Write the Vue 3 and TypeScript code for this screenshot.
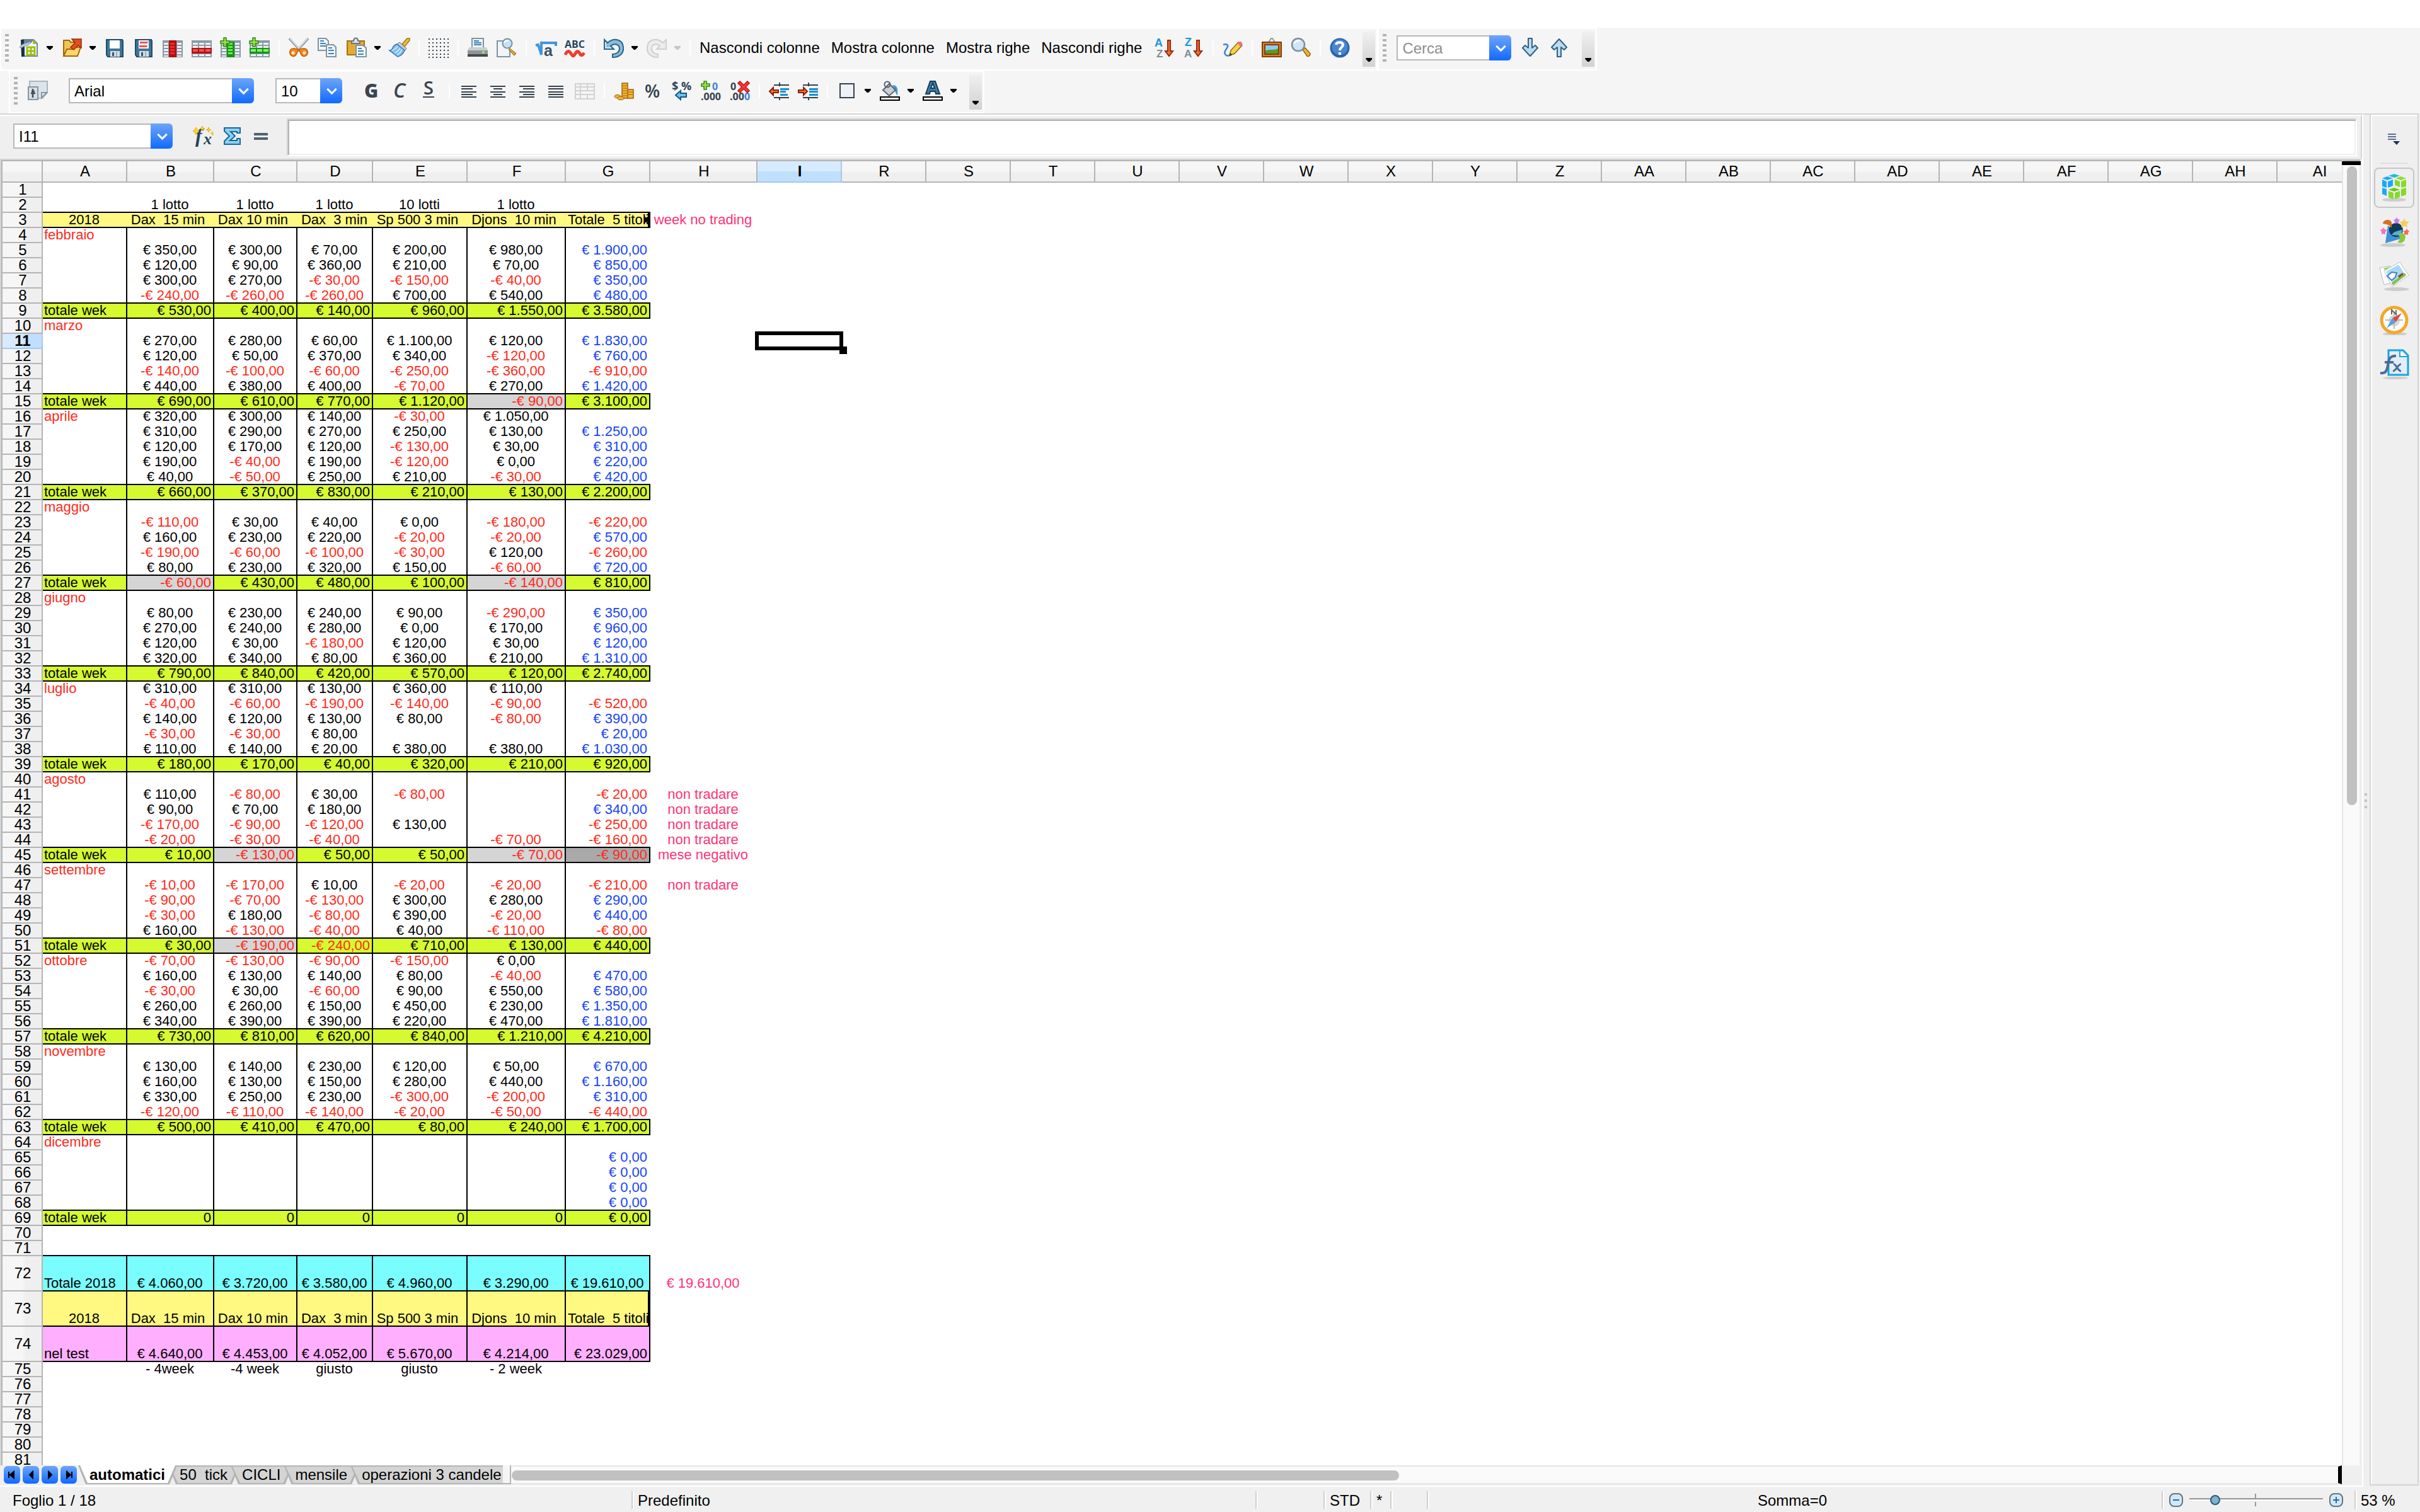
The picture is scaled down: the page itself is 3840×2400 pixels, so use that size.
<script setup lang="ts">
import { computed } from 'vue'

type Cell = { text: string; cls: string }

const icons: Record<string, string> = {
  newSheet: '<path d="M6 3h17l6 6v20H6z" fill="#fbfcfd" stroke="#6f8796" stroke-width="2"/><path d="M3 3h6v27H4z" fill="#16324a"/><path d="M8 2h16l-5 7H8z" fill="#6b8494"/><path d="M1 15C6 8 13 9 18 6c2 4-4 6-8 7s-5 4-9 2z" fill="#b9c9d2" stroke="#7e96a4"/><path d="M22 3l7 7h-7z" fill="#a7c41c"/><path d="M13 15h12v12H13zM19 15v12M13 21h12" fill="#fff" stroke="#9dc010" stroke-width="3"/>',
  open: '<path d="M3 28V4h9l2 3h9v20z" fill="#f3c556" stroke="#a96509" stroke-width="2"/><path d="M3 29l5-11h9l2-3h11l-5 14z" fill="#fbd66a" stroke="#a96509" stroke-width="2"/><path d="M14 15l7-7-5-6h15v14l-5-4-7 7z" fill="#e2501d" stroke="#9c2c08" stroke-width="1.5"/>',
  save: '<path d="M3 3h25l1 2v25H5l-2-3z" fill="#3f7596" stroke="#1f4d6b" stroke-width="2"/><path d="M8 4h16v13H8z" fill="#fff"/><path d="M9 21h15v9H9z" fill="#d6dde2"/><path d="M12 23h3v6h-3z" fill="#33566d"/><path d="M18 22h2v8h-2z" fill="#9fb0bb"/>',
  saveAs: '<path d="M3 3h25l1 2v25H5l-2-3z" fill="#3f7596" stroke="#1f4d6b" stroke-width="2"/><path d="M8 4h16v13H8z" fill="#fff"/><path d="M10 6h13l-1 3H10zM9 12h13l-1 3H9z" fill="#ef5350"/><path d="M9 21h15v9H9z" fill="#d6dde2"/><path d="M12 23h3v6h-3z" fill="#33566d"/><path d="M18 22h2v8h-2z" fill="#9fb0bb"/>',
  delCol: '<path d="M0 4h32v27H0z" fill="#8d9aa6"/><path d="M2 8h7v3H2zM2 13h7v3H2zM2 18h7v3H2zM2 23h7v3H2zM2 28h7v2H2zM23 8h7v3h-7zM23 13h7v3h-7zM23 18h7v3h-7zM23 23h7v3h-7zM23 28h7v2h-7z" fill="#eef2f6"/><path d="M10 4h12v27H10z" fill="#b01212"/><path d="M12 8h7v3h-7zM12 13h7v3h-7zM12 18h7v3h-7zM12 23h7v3h-7z" fill="#ef2b2b"/>',
  delRow: '<path d="M0 4h32v27H0z" fill="#8d9aa6"/><path d="M2 8h8v3H2zM12 8h8v3h-8zM22 8h8v3h-8zM2 13h8v3H2zM12 13h8v3h-8zM22 13h8v3h-8zM2 26h8v3H2zM12 26h8v3h-8zM22 26h8v3h-8z" fill="#eef2f6"/><path d="M0 16h32v9H0z" fill="#b01212"/><path d="M2 18h8v4H2zM12 18h8v4h-8zM22 18h8v4h-8z" fill="#f25050"/>',
  insCol: '<path d="M0 4h32v27H0z" fill="#8d9aa6"/><path d="M2 8h7v3H2zM2 13h7v3H2zM2 18h7v3H2zM2 23h7v3H2zM2 28h7v2H2zM23 8h7v3h-7zM23 13h7v3h-7zM23 18h7v3h-7zM23 23h7v3h-7zM23 28h7v2h-7z" fill="#eef2f6"/><path d="M10 6h12v25H10z" fill="#17921b"/><path d="M12 8h7v3h-7zM12 13h7v3h-7zM12 18h7v3h-7zM12 23h7v3h-7z" fill="#6bf04f"/><path d="M5 0h4v5h5v4H9v5H5V9H0V5h5z" fill="#a5e04a" stroke="#2d8a14" stroke-width="1.5"/>',
  insRow: '<path d="M0 4h32v27H0z" fill="#8d9aa6"/><path d="M2 8h8v3H2zM12 8h8v3h-8zM22 8h8v3h-8zM2 13h8v3H2zM12 13h8v3h-8zM22 13h8v3h-8zM2 26h8v3H2zM12 26h8v3h-8zM22 26h8v3h-8z" fill="#eef2f6"/><path d="M0 16h32v9H0z" fill="#17921b"/><path d="M2 18h8v4H2zM12 18h8v4h-8zM22 18h8v4h-8z" fill="#7cf560"/><path d="M5 0h4v5h5v4H9v5H5V9H0V5h5z" fill="#a5e04a" stroke="#2d8a14" stroke-width="1.5"/>',
  cut: '<path d="M1 1l18 20M31 1L13 21" stroke="#8a9aa6" stroke-width="3.5"/><path d="M2 1l17 19M30 1L13 20" stroke="#e2e9ee" stroke-width="1.5"/><path d="M15 18l-7-1c-5 0-7 4-6 8 1 4 6 6 9 3s2-6 4-7zM17 18l7-1c5 0 7 4 6 8-1 4-6 6-9 3s-2-6-4-7z" fill="#f28a1e" stroke="#c25a06" stroke-width="1.5"/><circle cx="7" cy="24" r="2.5" fill="#fbe6cd"/><circle cx="25" cy="24" r="2.5" fill="#fbe6cd"/>',
  copy: '<path d="M1 1h12l4 4v15H1z" fill="#f4f8fb" stroke="#7f93a3" stroke-width="2"/><path d="M4 5h6M4 9h9M4 13h9" stroke="#3a83b8" stroke-width="2"/><path d="M14 11h11l4 4v15H14z" fill="#f4f8fb" stroke="#7f93a3" stroke-width="2"/><path d="M17 16h6M17 20h9M17 25h9" stroke="#3a83b8" stroke-width="2"/>',
  paste: '<path d="M1 5h27v22H1z" fill="#e2ac33" stroke="#a4710e" stroke-width="2"/><path d="M8 9V5h3c0-6 7-6 7 0h3v4z" fill="#dfe3e6" stroke="#6c757b" stroke-width="2"/><path d="M15 12h11l5 4v14H15z" fill="#f4f8fb" stroke="#7f93a3" stroke-width="2"/><path d="M18 17h6M18 21h9M18 26h9" stroke="#3a83b8" stroke-width="2"/>',
  brush: '<path d="M20 10L28 1l4 0v3l-8 10z" fill="#f0bd3a" stroke="#a4710e" stroke-width="1.5"/><path d="M16 7l11 10-3 4L12 10z" fill="#c8ced2" stroke="#66737c"/><path d="M12 10l12 10c-2 5-6 9-11 10L0 20c4 0 4-2 5-4s3-5 7-6z" fill="#7fbdf0" stroke="#2f76b5" stroke-width="1.5"/><path d="M4 20c4-1 7-4 9-7M8 24c4-1 7-5 9-8M12 27c4-2 7-6 8-9" stroke="#d7ecfc" stroke-width="1.5" fill="none"/>',
  grid: '<path d="M0 2h32M0 8h32M0 14h32M0 20h32M0 26h32M0 31h32" stroke="#33424d" stroke-width="2" stroke-dasharray="2 4"/>',
  print: '<path d="M7 1h18v16H7z" fill="#f1f6fa" stroke="#7f93a3" stroke-width="2"/><path d="M10 5h8M10 8h12M10 11h12" stroke="#3a83b8" stroke-width="2"/><path d="M3 15h26l3 5v9H0v-9z" fill="#8e959a"/><path d="M3 15h26l3 5H0z" fill="#c9ced1"/><path d="M0 26h32v4H0z" fill="#45494c"/><circle cx="25" cy="23" r="2" fill="#8dff4a"/>',
  preview: '<path d="M1 5h20v25H1z" fill="#f1f5f9" stroke="#7f93a3" stroke-width="2"/><path d="M21 17l10 8-3 3-9-9z" fill="#e0a52c" stroke="#8f5f08"/><circle cx="17" cy="9" r="7.5" fill="#c5e1f4" stroke="#7393a8" stroke-width="2"/><path d="M12 8c1-3 4-4 7-3" stroke="#fff" stroke-width="2" fill="none"/>',
  formula: '<path d="M0 12l4-1 5 16V8h23v5" fill="none" stroke="#4296dc" stroke-width="4"/><text x="13" y="29" font-family="Liberation Sans, sans-serif" font-weight="bold" font-size="25" fill="#34526a">a</text>',
  spell: '<text x="0" y="16" font-family="Open Sans, sans-serif" font-weight="bold" font-size="16" fill="#24455e">ABC</text><path d="M1 27c3-7 6-7 9-2s4 5 7 0 5-4 7 0 4 3 7-1" fill="none" stroke="#e8402b" stroke-width="5"/>',
  undo: '<path d="M1 3v15h15l-5-5c5-5 14-3 14 4 0 6-5 9-11 9v5c11 0 18-6 17-16C30 2 16-1 6 8z" fill="#8cbbdb" stroke="#2a658c" stroke-width="2"/><path d="M3 7v9h9" fill="none" stroke="#d3e8f5" stroke-width="2"/>',
  redo: '<path d="M31 3v15H16l5-5c-5-5-13-3-13 4 0 6 5 9 10 9v5C7 31 0 25 1 15 2 2 16-1 26 8z" fill="#ececec" stroke="#cfcfcf" stroke-width="2"/>',
  sortAz: '<text x="0" y="14" font-family="Liberation Sans, sans-serif" font-weight="bold" font-size="18" fill="#1a97dc">A</text><text x="3" y="31" font-family="Liberation Sans, sans-serif" font-weight="bold" font-size="17" fill="#838d94">Z</text><path d="M21 4h4v17h4l-6 8-6-8h4z" fill="#f0772c" stroke="#a1260d" stroke-width="2"/>',
  sortZa: '<text x="2" y="13" font-family="Liberation Sans, sans-serif" font-weight="bold" font-size="18" fill="#1a97dc">Z</text><text x="1" y="31" font-family="Liberation Sans, sans-serif" font-weight="bold" font-size="17" fill="#838d94">A</text><path d="M21 4h4v17h4l-6 8-6-8h4z" fill="#f0772c" stroke="#a1260d" stroke-width="2"/>',
  draw: '<path d="M1 11c6-2 9 1 6 5s-6 9-1 12c3 1 6 0 8-1" fill="none" stroke="#3a86d6" stroke-width="2.5"/><path d="M11 28l2-8 12-13 6 5-12 13z" fill="#f8d148" stroke="#8f6a10" stroke-width="1.5"/><path d="M24 9l3-3c3 0 5 2 4 5l-3 3z" fill="#ee6f86"/><path d="M11 28l1-4 3 3z" fill="#222"/>',
  picture: '<path d="M11 7l4-6h2l4 6" fill="none" stroke="#8d9aa6" stroke-width="2"/><path d="M1 7h30v23H1z" fill="#c98a2c" stroke="#8a3d06" stroke-width="2"/><path d="M5 11h22v15H5z" fill="#8fcbf2" stroke="#8a3d06" stroke-width="2"/><path d="M6 21c6-4 11 0 20-4v8H6z" fill="#5a9a28"/>',
  find: '<path d="M19 19l4-3 8 9c0 4-3 5-5 4z" fill="#efb637" stroke="#92600a" stroke-width="1.5"/><circle cx="12" cy="11" r="10" fill="#cfe5f5" stroke="#7d909d" stroke-width="2.5"/><path d="M6 9c1-4 5-5 9-4" stroke="#fff" stroke-width="2.5" fill="none"/>',
  help: '<circle cx="16" cy="16" r="15.5" fill="#2c62ad"/><circle cx="16" cy="15" r="12.5" fill="#4a86cf"/><path d="M10 11c1-5 11-5 11 0 0 4-5 4-5 9" fill="none" stroke="#fff" stroke-width="4"/><path d="M14 23h4v4h-4z" fill="#fff"/>',
  down: '<path d="M13 1h6v15l5-4 4 4-12 13L4 16l4-4 5 4z" fill="#b9dcf2" stroke="#34617f" stroke-width="2" stroke-linejoin="round"/>',
  up: '<path d="M13 30h6V15l5 4 4-4L16 2 4 15l4 4 5-4z" fill="#b9dcf2" stroke="#34617f" stroke-width="2" stroke-linejoin="round"/>',
  styles: '<path d="M3 1h28v18l-8 9H3z" fill="#dde3e9" stroke="#a9b6c0" stroke-width="2"/><path d="M22 27v-8h8z" fill="#f6f8fa" stroke="#8496a3" stroke-width="2"/><path d="M1 10h15v20H1z" fill="#d9dfe5" stroke="#8496a3" stroke-width="2"/><path d="M8 13v14M5 20h7M6 17h5" stroke="#3c4d5a" stroke-width="2.5"/>',
  bold: '<text x="4" y="27" font-family="Open Sans, sans-serif" font-weight="800" font-size="30" fill="#3b4450">G</text>',
  italic: '<text x="4" y="27" font-family="Open Sans, sans-serif" font-style="italic" font-weight="600" font-size="32" fill="#3b4450">C</text>',
  underline: '<text x="6" y="22" font-family="Open Sans, sans-serif" font-weight="600" font-size="29" fill="#3b4450">S</text><path d="M5 26h18" stroke="#3b4450" stroke-width="2"/>',
  left: '<path d="M4 9h24M4 13h18M4 18h24M4 22h18M4 26h24" stroke="#35434e" stroke-width="2"/>',
  center: '<path d="M4 9h24M9 13h14M4 18h24M9 22h14M4 26h24" stroke="#35434e" stroke-width="2"/>',
  right: '<path d="M4 9h24M10 13h18M4 18h24M10 22h18M4 26h24" stroke="#35434e" stroke-width="2"/>',
  justify: '<path d="M4 9h24M4 13h24M4 18h24M4 22h24M4 26h24" stroke="#35434e" stroke-width="2"/>',
  merge: '<path d="M1 5h30v24H1zM1 10h30M1 16h30M1 22h30M9 5v24M20 5v11M20 22v7" fill="none" stroke="#d2d2d2" stroke-width="2"/>',
  currency: '<path d="M13 4h9v24h-9zM22 14h9v14h-9z" fill="#f3b634" stroke="#9a620c" stroke-width="1.5"/><path d="M13 8h9M13 12h9M13 16h9M13 20h9M13 24h9M22 18h9M22 22h9" stroke="#c07c12" stroke-width="1.5"/><ellipse cx="6" cy="25" rx="5" ry="2.5" fill="#f3b634" stroke="#9a620c"/><ellipse cx="11" cy="28" rx="5" ry="2.5" fill="#f3b634" stroke="#9a620c"/>',
  percent: '<text x="3" y="27" font-family="Open Sans, sans-serif" font-weight="600" font-size="28" fill="#33414e">%</text>',
  standard: '<text x="0" y="15" font-family="Open Sans, sans-serif" font-weight="bold" font-size="18" fill="#2f4657">$</text><text x="15" y="15" font-family="Open Sans, sans-serif" font-weight="bold" font-size="18" fill="#2f4657">%</text><path d="M6 23l8-7v4h9v6h-9v4z" fill="#6fc2ee" stroke="#12598a" stroke-width="2"/>',
  addDec: '<path d="M5 1h4v4h5v4H9v5H5V9H1V5h4z" fill="#a5e04a" stroke="#2d8a14" stroke-width="1.5"/><text x="18" y="15" font-family="Open Sans, sans-serif" font-weight="bold" font-size="16" fill="#3f7fe0">0</text><text x="0" y="31" font-family="Open Sans, sans-serif" font-weight="bold" font-size="16" fill="#33414e">.000</text>',
  delDec: '<text x="1" y="15" font-family="Open Sans, sans-serif" font-weight="bold" font-size="16" fill="#33414e">0</text><text x="0" y="31" font-family="Open Sans, sans-serif" font-weight="bold" font-size="16" fill="#33414e">.00</text><text x="23" y="31" font-family="Open Sans, sans-serif" font-weight="bold" font-size="16" fill="#3f7fe0">0</text><path d="M14 2l16 16M30 2L14 18" stroke="#a80f0f" stroke-width="6"/><path d="M15 3l14 14M29 3L15 17" stroke="#f33" stroke-width="3.5"/>',
  outdent: '<path d="M8 7h24M8 27h24M17 3v6M17 26v5" stroke="#33414e" stroke-width="2"/><path d="M18 12h14v3H18zM18 16h9v3h-9zM18 21h12v3H18z" fill="#1a8fd1"/><path d="M1 17l6-6v4h8v4H7v4z" fill="#f0772c" stroke="#8f1f0b" stroke-width="2"/>',
  indent: '<path d="M8 7h24M8 27h24M17 3v6M17 26v5" stroke="#33414e" stroke-width="2"/><path d="M18 12h14v3H18zM18 16h14v3H18zM18 21h14v3H18z" fill="#1a8fd1"/><path d="M15 17L9 11v4H1v4h8v4z" fill="#f0772c" stroke="#8f1f0b" stroke-width="2"/>',
  borders: '<path d="M5 5h22v22H5z" fill="#eef1f8" stroke="#33414e" stroke-width="2"/>',
  fill: '<path d="M20 7c8 0 9 5 8 16-3-1-3-6-4-9z" fill="#3a9fd4"/><path d="M5 15L15 5l10 10-10 9z" fill="#c9ced3" stroke="#56646f" stroke-width="2"/><circle cx="12" cy="6" r="4.5" fill="none" stroke="#56646f" stroke-width="2"/><path d="M1 26h30v5H1z" fill="#fff" stroke="#000" stroke-width="2"/>',
  fontColor: '<path d="M5 21L12 1h8l7 20h-6l-1-4h-8l-1 4zM13 12h6l-3-8z" fill="#3d7da5" stroke="#173f5c" stroke-width="2"/><path d="M1 26h30v5H1z" fill="#fff" stroke="#000" stroke-width="2"/>',
  wizard: '<text x="4" y="26" font-family="Liberation Serif, serif" font-style="italic" font-weight="bold" font-size="32" fill="#24455e">f</text><text x="17" y="29" font-family="Liberation Serif, serif" font-style="italic" font-weight="bold" font-size="26" fill="#24455e">x</text><path d="M5 2l2 4 3 2-3 2-2 4-2-4-3-2 3-2zM15 0l1 3 3 1-3 1-1 3-1-3-3-1 3-1zM25 2l1 3 3 1-3 1-1 3-1-3-3-1 3-1zM31 9l1 3v3l-3-3z" fill="#fbd338" stroke="#e6b20c"/>',
  sum: '<path d="M4 3h25v8h-5V9H14l7 7-8 7h11v-3h5v9H4v-5l8-8-8-8z" fill="#8fd0f2" stroke="#176a9e" stroke-width="2"/>',
  equals: '<path d="M5 13h22M5 20h22" stroke="#4c6273" stroke-width="4"/>',
}

const sideIcons: { id: string; label: string; body: string }[] = [
  { id: 'props', label: 'Proprietà', body: '<ellipse cx="24" cy="43" rx="19" ry="3" fill="#ccc"/><path d="M24 2l9 3-9 3-9-3z" fill="#17bfe0"/><path d="M13 6l9 3-9 3-8-3z" fill="#26a9f2"/><path d="M35 6l8 3-8 3-9-3z" fill="#8fdc33"/><path d="M5 11l7 3v10l-7-2zM14 14l8-3v10l-8 3zM5 24l7 2v11l-7-3z" fill="#18aaf5"/><path d="M25 11l8 3v9l-8-3zM35 14l8-3v11l-8 2zM35 26l8-2v11l-8 3z" fill="#85da2b"/><path d="M24 24l9 3-9 3-9-3z" fill="#6cc71b"/><path d="M15 29l8 3v10l-8-3zM25 32l8-3v10l-8 3z" fill="#85da2b"/>' },
  { id: 'styles', label: 'Stili e formattazione', body: '<ellipse cx="22" cy="45" rx="20" ry="3" fill="#ccc"/><path d="M14 14l24 20-28 8z" fill="#3d93da"/><circle cx="27" cy="21" r="11" fill="#0f3a58"/><path d="M20 29c4-7 12-6 17-9l-2 10z" fill="#5aaed6"/><path d="M6 11c1-7 12-8 14-2v9c-4-6-8-6-14-7z" fill="#d96f1a"/><path d="M30 27c8-3 14 1 11 9-2 6-8 7-12 4 4-2 6-8 1-13z" fill="#8cc63a"/><path d="M40 2l2 5 6 1-4 4 1 5-5-2-5 2 1-5-4-4 6-1z" fill="#f7ce5b"/><path d="M28 1l2 3 3 1-2 3v3l-3-1-3 1V8l-2-3 3-1z" fill="#c77bf0"/><path d="M7 17l2 3 4 1-3 3v4l-3-1-3 1v-4l-2-3 3-1z" fill="#f373b4"/><path d="M44 19l2 3 3 1-3 2v4l-3-1-3 1v-4l-2-2 4-1z" fill="#f26b63"/>' },
  { id: 'gallery', label: 'Galleria', body: '<ellipse cx="28" cy="45" rx="20" ry="3" fill="#ccc"/><path d="M1 11l16-3 6 26-15 4z" fill="#fff" stroke="#bbb"/><path d="M7 12l11-3-8 6z" fill="#8bd930"/><path d="M8 16L33 2l14 21-26 18z" fill="#fff" stroke="#aaa" stroke-dasharray="3 1"/><path d="M11 17L31 6l9 14-19 15z" fill="#a8d8f5"/><path d="M13 24l7-6 8 1-2 7-6 5z" fill="#fff" stroke="#3d7fc0" stroke-width="2"/><path d="M20 35l21-16 2 4-21 16z" fill="#7fc14b"/><path d="M30 24l7-5 2 2-7 6z" fill="#8b4a2f"/>' },
  { id: 'navigator', label: 'Navigatore', body: '<ellipse cx="25" cy="46" rx="19" ry="3" fill="#ccc"/><circle cx="24" cy="24" r="20" fill="#fff" stroke="#f3a82c" stroke-width="5"/><circle cx="24" cy="25" r="9" fill="#d8d8d8"/><path d="M10 24h28M24 10v28" stroke="#bbb" stroke-width="2"/><path d="M20 15V8l7 7V8" fill="none" stroke="#666" stroke-width="2"/><path d="M36 13L21 21l6 6z" fill="#dd4a3a"/><path d="M12 37l9-16 6 6z" fill="#5a9ee8"/>' },
  { id: 'functions', label: 'Funzioni', body: '<ellipse cx="26" cy="46" rx="20" ry="2" fill="#ccc"/><path d="M15 2h23l8 8v31H15z" fill="#e2edf9" stroke="#1ba3df" stroke-width="3"/><path d="M33 3v9h12" fill="#fff" stroke="#1ba3df" stroke-width="2"/><path d="M2 38c8 1 10-2 12-12 1-9 3-16 13-15M9 21h14" fill="none" stroke="#4a6d99" stroke-width="4"/><path d="M23 24c5 0 6 11 12 11M35 24c-5 0-8 11-13 11" fill="none" stroke="#4a6d99" stroke-width="3"/>' },
]

type Tool = { id: string; label: string; menu?: boolean; off?: boolean } | 'sep'
const standardTools: Tool[] = [
  { id: 'newSheet', label: 'Nuovo', menu: true }, { id: 'open', label: 'Apri', menu: true },
  { id: 'save', label: 'Salva' }, { id: 'saveAs', label: 'Salva con nome' },
  { id: 'delCol', label: 'Elimina colonne' }, { id: 'delRow', label: 'Elimina righe' },
  { id: 'insCol', label: 'Inserisci colonne' }, { id: 'insRow', label: 'Inserisci righe' }, 'sep',
  { id: 'cut', label: 'Taglia' }, { id: 'copy', label: 'Copia' }, { id: 'paste', label: 'Incolla', menu: true },
  { id: 'brush', label: 'Copia formato' }, 'sep', { id: 'grid', label: 'Griglia' }, 'sep',
  { id: 'print', label: 'Stampa' }, { id: 'preview', label: 'Anteprima' }, 'sep',
  { id: 'formula', label: 'Formula' }, { id: 'spell', label: 'Controllo ortografico' }, 'sep',
  { id: 'undo', label: 'Annulla', menu: true }, { id: 'redo', label: 'Ripristina', menu: true, off: true }, 'sep',
]
const macroButtons = ['Nascondi colonne', 'Mostra colonne', 'Mostra righe', 'Nascondi righe']
const extraTools: Tool[] = [
  { id: 'sortAz', label: 'Ordina crescente' }, { id: 'sortZa', label: 'Ordina decrescente' }, 'sep',
  { id: 'draw', label: 'Disegno' }, 'sep', { id: 'picture', label: 'Galleria' }, { id: 'find', label: 'Zoom' }, 'sep',
  { id: 'help', label: 'Guida' },
]
const formatTools: Tool[] = [
  { id: 'bold', label: 'Grassetto' }, { id: 'italic', label: 'Corsivo' }, { id: 'underline', label: 'Sottolineato' }, 'sep',
  { id: 'left', label: 'Allinea a sinistra' }, { id: 'center', label: 'Centra' }, { id: 'right', label: 'Allinea a destra' },
  { id: 'justify', label: 'Giustifica' }, { id: 'merge', label: 'Unisci celle' }, 'sep',
  { id: 'currency', label: 'Valuta' }, { id: 'percent', label: 'Percentuale' }, { id: 'standard', label: 'Standard' },
  { id: 'addDec', label: 'Aggiungi decimale' }, { id: 'delDec', label: 'Elimina decimale' }, 'sep',
  { id: 'outdent', label: 'Riduci rientro' }, { id: 'indent', label: 'Aumenta rientro' }, 'sep',
  { id: 'borders', label: 'Bordi', menu: true }, { id: 'fill', label: 'Sfondo', menu: true },
  { id: 'fontColor', label: 'Colore carattere', menu: true },
]

const columns = [
  ...[['A', 134], ['B', 138], ['C', 132], ['D', 120], ['E', 150], ['F', 156], ['G', 134], ['H', 170], ['I', 134]],
  ...['R', 'S', 'T', 'U', 'V', 'W', 'X', 'Y', 'Z', 'AA', 'AB', 'AC', 'AD', 'AE', 'AF', 'AG', 'AH', 'AI'].map((n) => [n, 134]),
].map(([name, width]) => ({ name: String(name), width: Number(width) }))
const HEAD = 64
const tableWidth = computed(() => HEAD + columns.reduce((sum, c) => sum + c.width, 0))

// Each month: name, figures beside the name, four weeks (B..G), totals (B..G).
type Num = number | null
interface Month { name: string; first?: Num[]; weeks: Num[][]; total: Num[] }
const months: Month[] = [
  { name: 'febbraio', weeks: [[350, 300, 70, 200, 980, 1900], [120, 90, 360, 210, 70, 850], [300, 270, -30, -150, -40, 350], [-240, -260, -260, 700, 540, 480]], total: [530, 400, 140, 960, 1550, 3580] },
  { name: 'marzo', weeks: [[270, 280, 60, 1100, 120, 1830], [120, 50, 370, 340, -120, 760], [-140, -100, -60, -250, -360, -910], [440, 380, 400, -70, 270, 1420]], total: [690, 610, 770, 1120, -90, 3100] },
  { name: 'aprile', first: [320, 300, 140, -30, 1050], weeks: [[310, 290, 270, 250, 130, 1250], [120, 170, 120, -130, 30, 310], [190, -40, 190, -120, 0, 220], [40, -50, 250, 210, -30, 420]], total: [660, 370, 830, 210, 130, 2200] },
  { name: 'maggio', weeks: [[-110, 30, 40, 0, -180, -220], [160, 230, 220, -20, -20, 570], [-190, -60, -100, -30, 120, -260], [80, 230, 320, 150, -60, 720]], total: [-60, 430, 480, 100, -140, 810] },
  { name: 'giugno', weeks: [[80, 230, 240, 90, -290, 350], [270, 240, 280, 0, 170, 960], [120, 30, -180, 120, 30, 120], [320, 340, 80, 360, 210, 1310]], total: [790, 840, 420, 570, 120, 2740] },
  { name: 'luglio', first: [310, 310, 130, 360, 110], weeks: [[-40, -60, -190, -140, -90, -520], [140, 120, 130, 80, -80, 390], [-30, -30, 80, null, null, 20], [110, 140, 20, 380, 380, 1030]], total: [180, 170, 40, 320, 210, 920] },
  { name: 'agosto', weeks: [[110, -80, 30, -80, null, -20], [90, 70, 180, null, null, 340], [-170, -90, -120, 130, null, -250], [-20, -30, -40, null, -70, -160]], total: [10, -130, 50, 50, -70, -90] },
  { name: 'settembre', weeks: [[-10, -170, 10, -20, -20, -210], [-90, -70, -130, 300, 280, 290], [-30, 180, -80, 390, -20, 440], [160, -130, -40, 40, -110, -80]], total: [30, -190, -240, 710, 130, 440] },
  { name: 'ottobre', first: [-70, -130, -90, -150, 0], weeks: [[160, 130, 140, 80, -40, 470], [-30, 30, -60, 90, 550, 580], [260, 260, 150, 450, 230, 1350], [340, 390, 390, 220, 470, 1810]], total: [730, 810, 620, 840, 1210, 4210] },
  { name: 'novembre', weeks: [[130, 140, 230, 120, 50, 670], [160, 130, 150, 280, 440, 1160], [330, 250, 230, -300, -200, 310], [-120, -110, -140, -20, -50, -440]], total: [500, 410, 470, 80, 240, 1700] },
  { name: 'dicembre', weeks: [1, 2, 3, 4].map(() => [null, null, null, null, null, 0]), total: [] },
]
const grayTotals: Record<string, string> = { '15F': 'gray', '27B': 'gray', '27F': 'gray', '45C': 'gray', '45F': 'gray', '45G': 'dark', '51C': 'gray' }
const notes: Record<number, string> = { 3: 'week no trading', 41: 'non tradare', 42: 'non tradare', 43: 'non tradare', 44: 'non tradare', 45: 'mese negativo', 47: 'non tradare', 72: '€ 19.610,00' }

function euro(n: number): string {
  const digits = String(Math.abs(n)).replace(/(\d)(?=(\d{3})$)/, '$1.')
  return `${n < 0 ? '-' : ''}€ ${digits},00`
}
const letters = 'BCDEFG'
const titles = ['Dax  15 min ', 'Dax 10 min ', 'Dax  3 min', 'Sp 500 3 min ', 'Djons  10 min ', 'Totale  5 titoli']

const sheet: Record<number, Cell[]> = {}
sheet[2] = [
  { text: '', cls: 'line' },
  ...['1 lotto', '1 lotto', '1 lotto', '10 lotti', '1 lotto', ''].map((text) => ({ text, cls: 'mid line' })),
]
sheet[3] = [
  { text: '2018', cls: 'mid line yellow' },
  ...titles.map((text, i) => ({ text, cls: i === 5 ? 'line side yellow clipped more' : 'mid line yellow' })),
]
months.forEach((m, k) => {
  const start = 4 + k * 6
  const body = (n: Num | undefined, i: number): Cell => ({
    text: n === null || n === undefined ? '' : euro(n),
    cls: `${i === 5 ? 'end blue' : 'mid side'}${(n ?? 0) < 0 ? ' red' : ''}`,
  })
  sheet[start] = [{ text: m.name, cls: 'side red' }, ...[0, 1, 2, 3, 4, 5].map((i) => body(m.first?.[i], i))]
  m.weeks.forEach((w, j) => {
    sheet[start + 1 + j] = [{ text: '', cls: 'side' }, ...w.map(body)]
  })
  sheet[start + 4].forEach((c) => (c.cls += ' line'))
  const row = start + 5
  sheet[row] = [{ text: 'totale wek', cls: 'side line lime' }]
  for (let i = 0; i < 6; i++) {
    const n = m.total[i]
    const text = n === undefined ? (i === 5 ? '€ 0,00' : '0') : euro(n as number)
    const bg = grayTotals[row + letters[i]] ?? 'lime'
    sheet[row].push({ text, cls: `end side line ${bg}${(n ?? 0) < 0 ? ' red' : ''}` })
  }
})
sheet[71] = Array.from({ length: 7 }, () => ({ text: '', cls: 'line' }))
sheet[72] = [
  { text: 'Totale 2018', cls: 'side line cyan' },
  ...[4060, 3720, 3580, 4960, 3290].map((n) => ({ text: euro(n), cls: 'mid side line cyan' })),
  { text: '€ 19.610,00', cls: 'mid side line cyan' },
]
sheet[73] = [
  { text: '2018', cls: 'mid side line yellow' },
  ...titles.map((text, i) => ({ text, cls: `${i === 5 ? 'clipped' : 'mid'} side line yellow` })),
]
sheet[74] = [
  { text: 'nel test', cls: 'side line pink' },
  ...[4640, 4453, 4052, 5670, 4214].map((n) => ({ text: euro(n), cls: 'mid side line pink' })),
  { text: '€ 23.029,00', cls: 'end side line pink' },
]
sheet[75] = ['', '- 4week', '-4 week', 'giusto', 'giusto', '- 2 week'].map((text) => ({ text, cls: 'mid' }))

const rows = Array.from({ length: 81 }, (_, r) => {
  const n = r + 1
  const cells = columns.map((_c, i): Cell => {
    if (i === 7 && notes[n]) return { text: notes[n], cls: 'mid note' }
    if (i === 8 && n === 11) return { text: '', cls: 'cursor' }
    return sheet[n]?.[i] ?? { text: '', cls: '' }
  })
  return { n, tall: n >= 72 && n <= 74, cells }
})

const navButtons = [
  { label: 'Primo foglio', d: 'M8 9v10M10 14l6-5v10z' },
  { label: 'Foglio precedente', d: 'M11 14l5-5v10z' },
  { label: 'Foglio successivo', d: 'M16 14l-5-5v10z' },
  { label: 'Ultimo foglio', d: 'M18 9v10M16 14l-6-5v10z' },
]
const tabs = ['automatici', '50  tick', 'CICLI', 'mensile', 'operazioni 3 candele']
</script>

<template>
  <div class="app">
    <header class="bars">
      <div class="bar-row">
        <div class="toolbar" role="toolbar" aria-label="Standard">
          <i class="grip"></i>
          <template v-for="(t, i) in standardTools" :key="i">
            <i v-if="t === 'sep'" class="sep"></i>
            <button v-else class="tool" :class="{ off: t.off }" :aria-label="t.label">
              <svg viewBox="0 0 32 32" v-html="icons[t.id]"></svg>
              <i v-if="t.menu" class="arrow"></i>
            </button>
          </template>
          <div class="macros">
            <button v-for="m in macroButtons" :key="m" class="macro">{{ m }}</button>
          </div>
          <template v-for="(t, i) in extraTools" :key="'x' + i">
            <i v-if="t === 'sep'" class="sep"></i>
            <button v-else class="tool" :aria-label="t.label"><svg viewBox="0 0 32 32" v-html="icons[t.id]"></svg></button>
          </template>
          <button class="cap" aria-label="Altri comandi"><i class="arrow"></i></button>
        </div>
        <div class="toolbar" role="toolbar" aria-label="Ricerca">
          <i class="grip"></i>
          <div class="combo search">
            <input type="text" placeholder="Cerca" aria-label="Cerca" />
            <button class="drop" aria-label="Ricerche recenti"><svg viewBox="0 0 34 38"><path d="M11 16l7 7 7-7" /></svg></button>
          </div>
          <button class="tool" aria-label="Trova successivo"><svg viewBox="0 0 32 32" v-html="icons.down"></svg></button>
          <button class="tool" aria-label="Trova precedente"><svg viewBox="0 0 32 32" v-html="icons.up"></svg></button>
          <button class="cap" aria-label="Altri comandi di ricerca"><i class="arrow"></i></button>
        </div>
      </div>
      <div class="bar-row second">
        <div class="toolbar" role="toolbar" aria-label="Formattazione">
          <i class="grip"></i>
          <button class="tool" aria-label="Stili"><svg viewBox="0 0 32 32" v-html="icons.styles"></svg></button>
          <div class="combo font">
            <select aria-label="Nome carattere"><option>Arial</option></select>
            <span class="drop"><svg viewBox="0 0 34 38"><path d="M11 16l7 7 7-7" /></svg></span>
          </div>
          <div class="combo size">
            <select aria-label="Dimensione carattere"><option>10</option></select>
            <span class="drop"><svg viewBox="0 0 34 38"><path d="M11 16l7 7 7-7" /></svg></span>
          </div>
          <template v-for="(t, i) in formatTools" :key="i">
            <i v-if="t === 'sep'" class="sep"></i>
            <button v-else class="tool" :aria-label="t.label">
              <svg viewBox="0 0 32 32" v-html="icons[t.id]"></svg>
              <i v-if="t.menu" class="arrow"></i>
            </button>
          </template>
          <button class="cap" aria-label="Altri comandi di formattazione"><i class="arrow"></i></button>
        </div>
      </div>
    </header>

    <div class="work">
      <main class="main">
        <div class="formula">
          <div class="combo name">
            <input type="text" value="I11" aria-label="Casella del nome" />
            <button class="drop" aria-label="Elenco nomi"><svg viewBox="0 0 34 38"><path d="M11 16l7 7 7-7" /></svg></button>
          </div>
          <button class="tool" aria-label="Creazione guidata funzione"><svg viewBox="0 0 32 32" v-html="icons.wizard"></svg></button>
          <button class="tool" aria-label="Somma"><svg viewBox="0 0 32 32" v-html="icons.sum"></svg></button>
          <button class="tool" aria-label="Funzione"><svg viewBox="0 0 32 32" v-html="icons.equals"></svg></button>
          <input class="entry" type="text" aria-label="Riga di immissione" />
        </div>
        <div class="grid-area">
          <div class="grid-view">
            <table :style="{ width: tableWidth + 'px' }">
              <colgroup>
                <col :style="{ width: HEAD + 'px' }" />
                <col v-for="c in columns" :key="c.name" :style="{ width: c.width + 'px' }" />
              </colgroup>
              <thead>
                <tr>
                  <th class="corner"></th>
                  <th v-for="c in columns" :key="c.name" scope="col" :class="{ on: c.name === 'I' }">{{ c.name }}</th>
                </tr>
              </thead>
              <tbody>
                <tr v-for="r in rows" :key="r.n" :class="{ tall: r.tall }">
                  <th scope="row" :class="{ on: r.n === 11 }">{{ r.n }}</th>
                  <td v-for="(c, i) in r.cells" :key="i" :class="c.cls">{{ c.text }}</td>
                </tr>
              </tbody>
            </table>
          </div>
          <div class="vscroll"><i class="vthumb"></i></div>
        </div>
        <div class="tabbar">
          <div class="navs">
            <button v-for="b in navButtons" :key="b.label" class="nav" :aria-label="b.label">
              <svg viewBox="0 0 26 28"><path :d="b.d" /></svg>
            </button>
          </div>
          <div class="tabs" role="tablist">
            <button v-for="(t, i) in tabs" :key="t" role="tab" class="tab" :class="{ active: i === 0 }"><span>{{ t }}</span></button>
          </div>
          <i class="tab-split"></i>
          <div class="hscroll"><i class="hthumb"></i></div>
        </div>
      </main>
      <div class="splitter"><i></i><i></i><i></i></div>
      <aside class="side-panel">
        <button class="menu" aria-label="Impostazioni barra laterale">
          <svg viewBox="0 0 20 20"><path d="M0 2h13M0 6h13M0 10h13" stroke="#5f7090" stroke-width="2" /><path d="M8 13h11l-5 6z" fill="#1f3358" /></svg>
        </button>
        <hr />
        <button v-for="s in sideIcons" :key="s.id" class="deck" :class="{ current: s.id === 'props' }" :aria-label="s.label">
          <svg viewBox="0 0 48 48" v-html="s.body"></svg>
        </button>
      </aside>
    </div>

    <footer class="status">
      <div class="st first">Foglio 1 / 18</div>
      <div class="st">Predefinito</div>
      <div class="st"></div>
      <div class="st">STD</div>
      <div class="st">*</div>
      <div class="st"></div>
      <div class="st sum">Somma=0</div>
      <div class="st zoom">
        <button class="zbtn" aria-label="Riduci"><svg viewBox="0 0 22 22"><path d="M6 11h10" /></svg></button>
        <input type="range" min="0" max="100" value="17" aria-label="Zoom" />
        <button class="zbtn" aria-label="Ingrandisci"><svg viewBox="0 0 22 22"><path d="M6 11h10M11 6v10" /></svg></button>
      </div>
      <div class="st">53 %</div>
    </footer>
  </div>
</template>

<style>
body {
  margin: 0;
}
</style>

<style scoped>
.app {
  display: flex;
  flex-direction: column;
  height: 100vh;
  box-sizing: border-box;
  padding-top: 44px;
  overflow: hidden;
  background: #fff;
  color: #000;
  font: 24px/32px 'Liberation Sans', Arial, sans-serif;
}
.app * {
  box-sizing: border-box;
}
button {
  border: 0;
  padding: 0;
  background: none;
  color: inherit;
  font: inherit;
}
input,
select {
  margin: 0;
  font: inherit;
  color: inherit;
  border-radius: 0;
  outline: 0;
}
svg {
  display: block;
}
.bars {
  background: #f5f5f5;
}
.bar-row {
  display: flex;
}
.second {
  padding-left: 14px;
}
.toolbar {
  display: flex;
  align-items: center;
  gap: 14px;
  height: 68px;
  padding: 0 2px 4px 6px;
  border: 2px solid #fff;
}
.grip {
  width: 6px;
  height: 44px;
  margin-right: 2px;
  background: repeating-linear-gradient(#b4b4b4 0 4px, #fff 4px 6px, #f5f5f5 6px 8px);
}
.sep {
  width: 2px;
  height: 24px;
  background: #fff;
}
.tool {
  display: flex;
  align-items: center;
  gap: 12px;
  flex: none;
}
.tool svg {
  width: 32px;
  height: 32px;
  overflow: visible;
}
.arrow {
  width: 10px;
  height: 6px;
  background: #000;
  clip-path: polygon(0 0, 100% 0, 100% 34%, 60% 100%, 40% 100%, 0 34%);
}
.off .arrow {
  background: #c6c6c6;
}
.macros {
  display: flex;
  gap: 18px;
  margin-right: 6px;
}
.macro {
  white-space: nowrap;
}
.cap {
  display: flex;
  align-items: flex-end;
  align-self: flex-end;
  justify-content: center;
  width: 20px;
  height: 56px;
  margin-left: 6px;
  padding-bottom: 8px;
  background: linear-gradient(#f0f0f0, #d2d2d2);
}
.combo {
  display: flex;
  flex: none;
  height: 40px;
}
.combo input,
.combo select {
  flex: 1;
  min-width: 0;
  height: 40px;
  padding: 2px 0 0 7px;
  border: 2px solid #b8b8b8;
  border-right: 0;
  background: #fff;
  appearance: none;
}
.combo input::placeholder {
  color: #8e8e8e;
  opacity: 1;
}
.drop {
  flex: none;
  width: 35px;
  height: 40px;
  border-radius: 0 6px 6px 0;
  background: linear-gradient(#6da5f8, #1169ff);
}
.drop svg {
  width: 35px;
  height: 40px;
}
.drop path {
  fill: none;
  stroke: #fff;
  stroke-width: 3;
}
.search {
  width: 182px;
}
.font {
  width: 294px;
  margin-left: 19px;
}
.size {
  width: 106px;
  margin: 0 17px 0 20px;
}
.work {
  display: flex;
  flex: 1;
  min-height: 0;
  background: #efefef;
}
.main {
  display: flex;
  flex: 1;
  flex-direction: column;
  min-width: 0;
  border-top: 2px solid #d4d4d4;
  border-right: 2px solid #fff;
}
.formula {
  display: flex;
  align-items: center;
  gap: 14px;
  height: 70px;
  padding: 4px 6px 4px 21px;
  border-top: 2px solid #fff;
  border-right: 2px solid #d4d4d4;
}
.formula .combo,
.formula .tool {
  margin-bottom: 4px;
}
.name {
  width: 253px;
  margin-right: 18px;
}
.entry {
  flex: 1;
  height: 60px;
  margin-left: 11px;
  border: 2px solid;
  border-color: #d4d4d4 #fff #fff #d4d4d4;
  box-shadow: inset 2px 2px #b4b4b4, inset -2px -2px #f0f0f0;
  background: #fff;
}
.grid-area {
  display: flex;
  flex: 1;
  min-height: 0;
  margin-right: 2px;
  border-top: 2px solid #d4d4d4;
  border-left: 2px solid #d4d4d4;
}
.grid-view {
  flex: 1;
  min-width: 0;
  overflow: hidden;
  border-top: 2px solid #b4b4b4;
  border-left: 2px solid #b4b4b4;
  background: #fff;
}
table {
  table-layout: fixed;
  border-spacing: 0;
}
th {
  height: 24px;
  padding: 0 0 0 2px;
  border: solid #b5b5b5;
  border-width: 0 2px 2px 0;
  background: linear-gradient(90deg, #f6f6f6 50%, #efefef 60%);
  font-weight: 400;
  line-height: 22px;
}
thead th {
  height: 34px;
  background: linear-gradient(#f6f6f6 50%, #efefef 60%);
  line-height: 32px;
}
th.on {
  border-color: #a9c8ea;
  background: linear-gradient(90deg, #d6ebff 50%, #c0dffd 60%);
  font-weight: 700;
}
thead th.on {
  background: linear-gradient(#d6ebff 50%, #c0dffd 50%);
}
td {
  --side: transparent;
  --line: transparent;
  height: 24px;
  padding: 0 2px 2px;
  box-shadow: inset -2px 0 var(--side), inset 0 -2px var(--line);
  font-size: 22px;
  line-height: 22px;
  vertical-align: bottom;
  white-space: pre;
}
.tall td {
  height: 56px;
}
.mid {
  padding: 0 3px 2px 0;
  text-align: center;
}
.end {
  padding: 0 5px 2px 0;
  text-align: right;
}
.side {
  --side: #000;
}
.line {
  --line: #000;
}
.blue {
  color: #1844f5;
}
.red {
  color: #ff2a1a;
}
.note {
  color: #ff3375;
}
.yellow {
  background: #fff981;
}
.lime {
  background: #d5fa30;
}
.cyan {
  background: #7afdff;
}
.pink {
  background: #ffaffe;
}
.gray {
  background: #d5d5d5;
}
.dark {
  background: #a9a9a9;
}
.clipped {
  padding: 0 0 2px 3px;
  border-right: 2px solid #000;
  overflow: hidden;
}
.more {
  position: relative;
}
.more::after {
  content: '';
  position: absolute;
  top: 5px;
  right: 0;
  width: 8px;
  height: 12px;
  background: #000;
  clip-path: polygon(0 0, 100% 50%, 0 100%);
}
.cursor {
  position: relative;
}
.cursor::before {
  content: '';
  position: absolute;
  inset: -4px -2px -2px -4px;
  border: 6px solid #000;
}
.cursor::after {
  content: '';
  position: absolute;
  right: -8px;
  bottom: -8px;
  width: 12px;
  height: 12px;
  background: #000;
}
.vscroll {
  width: 30px;
  border-top: 2px solid #b4b4b4;
  border-right: 2px solid #ececec;
  border-left: 2px solid #e6e6e6;
  background: #fafafa;
}
.vscroll::before {
  content: '';
  display: block;
  height: 6px;
  margin: 0 -2px;
  background: #000;
}
.vthumb {
  display: block;
  width: 16px;
  height: 49%;
  margin: 2px 6px;
  border-radius: 8px;
  background: #c1c1c1;
}
.tabbar {
  display: flex;
  height: 34px;
  padding: 0 32px 2px 6px;
  border-bottom: 2px solid #fff;
}
.navs {
  display: flex;
  gap: 4px;
  padding-top: 1px;
}
.nav {
  width: 26px;
  height: 28px;
  border-radius: 6px;
  background: linear-gradient(#6da5f8, #1169ff);
}
.nav path {
  fill: #000;
  stroke: #000;
  stroke-width: 2;
}
.tabs {
  display: flex;
  gap: 5px;
  width: 676px;
  padding-left: 11px;
  overflow: hidden;
}
.tab {
  position: relative;
  flex: none;
  z-index: 0;
  height: 30px;
  padding: 0 9px;
  line-height: 26px;
  white-space: pre;
}
.tab::before,
.tab::after {
  content: '';
  position: absolute;
  z-index: -1;
  inset: 0 -10px 0 -9px;
  background: #b4b4b4;
  clip-path: polygon(0 0, 100% 0, calc(100% - 12px) 100%, 12px 100%);
}
.tab::after {
  inset: 2px -7px 2px -6px;
  background: #d4d4d4;
}
.active {
  z-index: 1;
  font-weight: 700;
}
.active::after {
  top: 0;
  background: #fff;
}
.tab-split {
  width: 13px;
  height: 30px;
  border: solid #b4b4b4;
  border-width: 0 2px 2px 0;
  background: #f5f5f5;
}
.hscroll {
  flex: 1;
  height: 30px;
  padding: 6px 0 0 1px;
  border: solid #e6e6e6;
  border-width: 2px 0;
  border-right: 6px solid #000;
  background: #fafafa;
}
.hthumb {
  display: block;
  width: 48.6%;
  height: 16px;
  border-radius: 8px;
  background: #c1c1c1;
}
.splitter {
  display: flex;
  flex-direction: column;
  justify-content: center;
  gap: 6px;
  width: 10px;
  padding-left: 2px;
  border-top: 2px solid #d4d4d4;
}
.splitter i {
  width: 4px;
  height: 4px;
  background: #c4c4c4;
}
.side-panel {
  display: flex;
  flex-direction: column;
  align-items: center;
  width: 78px;
  margin: 0 2px 2px 0;
  border: 2px solid #d4d4d4;
  box-shadow: inset 2px 2px #fff;
}
.menu {
  width: 20px;
  height: 20px;
  margin: 29px 0 27px;
}
.menu svg {
  width: 20px;
  height: 20px;
}
hr {
  width: 44px;
  height: 2px;
  margin: 0 0 6px;
  border: 0;
  background: #dedede;
}
.deck {
  display: grid;
  place-items: center;
  width: 64px;
  height: 64px;
  margin-bottom: 6px;
  border: 2px solid transparent;
}
.deck svg {
  width: 48px;
  height: 48px;
}
.current {
  border-color: #c6c6c6;
  border-radius: 8px;
}
.status {
  display: grid;
  grid-template-columns: 1002fr 990fr 108px 74px 32px 58px 1166fr 306px 104px;
  height: 40px;
  padding-top: 7px;
  background: #f0f0f0;
}
.st {
  height: 28px;
  padding-left: 8px;
  border-left: 2px solid #cfcfcf;
  box-shadow: inset 2px 0 #fff;
  line-height: 30px;
  white-space: nowrap;
}
.first {
  padding-left: 20px;
  border-left: 0;
  box-shadow: none;
}
.sum {
  padding: 0 8px 0 0;
  text-align: center;
}
.zoom {
  display: flex;
  align-items: center;
  gap: 10px;
  padding-left: 10px;
}
.zbtn {
  width: 22px;
  height: 22px;
  border: 2px solid #66737c;
  border-radius: 8px;
  background: #d3e8f7;
}
.zbtn svg {
  width: 22px;
  height: 22px;
  margin: -2px;
}
.zbtn path {
  fill: none;
  stroke: #1b6ca8;
  stroke-width: 2;
}
.zoom input {
  flex: none;
  width: 212px;
  height: 20px;
  appearance: none;
  background:
    linear-gradient(#999, #999) 104px 0 / 2px 7px no-repeat,
    linear-gradient(#999, #999) 104px 13px / 2px 7px no-repeat,
    linear-gradient(#929292 0 2px, #fff 2px 4px) 0 7px / 100% 4px no-repeat;
}
.zoom input::-webkit-slider-thumb {
  appearance: none;
  width: 16px;
  height: 16px;
  border: 2px solid #2b5a78;
  border-radius: 50%;
  background: #7fb0cc;
}
</style>
